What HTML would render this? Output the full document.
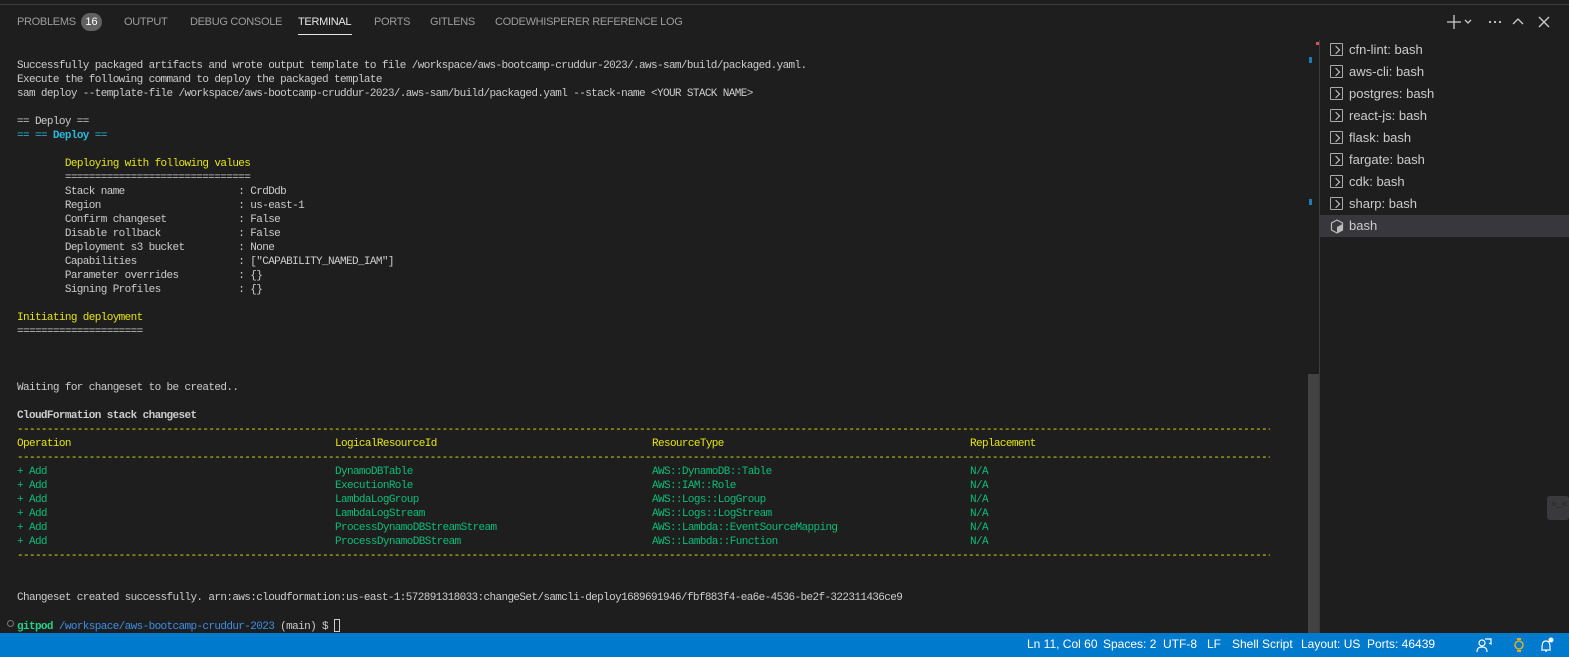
<!DOCTYPE html>
<html><head><meta charset="utf-8"><style>
*{margin:0;padding:0;box-sizing:border-box}
body{width:1569px;height:657px;background:#1e1e1e;overflow:hidden;position:relative;font-family:"Liberation Sans",sans-serif;color:#ccc}
.topline{position:absolute;left:0;top:4px;width:1569px;height:1px;background:#3c3c3c}
.tab{position:absolute;top:16px;font-size:11px;color:#9d9d9d;letter-spacing:-0.3px}
.tab.act{color:#e7e7e7}
.uline{position:absolute;left:298px;top:34px;width:54px;height:1px;background:#e7e7e7}
.badge{position:absolute;left:81px;top:13px;width:21px;height:18px;border-radius:9px;background:#616161;color:#fff;font-size:11px;text-align:center;line-height:18px}
pre{position:absolute;left:17px;top:59px;font-family:"Liberation Mono",monospace;font-size:11px;letter-spacing:-0.62px;line-height:14px;color:#ccc}
.y{color:#e5e510}.g{color:#0dbc79}.c{color:#29b8db;font-weight:bold}.b{font-weight:bold}.gp{color:#23d18b;font-weight:bold}.bl{color:#3b8eea}
.d{display:inline-block;width:1253px;overflow:hidden;vertical-align:top;color:#e5e510}
.c1,.c2,.c3{display:inline-block;vertical-align:top}
.c1{width:318px}.c2{width:317px}.c3{width:318px}
.thumb{position:absolute;left:1308px;top:374px;width:11px;height:259px;background:#424242}
.vline{position:absolute;left:1319px;top:40px;width:1px;height:593px;background:#3c3c3c}
.item{position:absolute;left:1320px;width:249px;height:22px;font-size:13px;color:#ccc;line-height:22px}
.item span.ic{position:absolute;left:10px;top:4px;width:13px;height:13px;border:1px solid #aaa;border-radius:1px}
.item span.ic:after{content:"";position:absolute;left:2px;top:2.5px;width:5px;height:5px;border-right:1.3px solid #ccc;border-bottom:1.3px solid #ccc;transform:rotate(-45deg)}
.item .t{position:absolute;left:29px}
.status{position:absolute;left:0;top:633px;width:1569px;height:24px;background:#007acc;color:#fff;font-size:12px}
.status span{position:absolute;top:4px}
</style></head><body>
<div class="topline"></div>
<div class="tab" style="left:17px">PROBLEMS</div>
<div class="badge">16</div>
<div class="tab" style="left:124px">OUTPUT</div>
<div class="tab" style="left:190px">DEBUG CONSOLE</div>
<div class="tab act" style="left:298px">TERMINAL</div>
<div class="uline"></div>
<div class="tab" style="left:374px">PORTS</div>
<div class="tab" style="left:430px">GITLENS</div>
<div class="tab" style="left:495px">CODEWHISPERER REFERENCE LOG</div>
<svg style="position:absolute;left:1444px;top:12px" width="110" height="20" viewBox="0 0 110 20">
<g stroke="#ccc" stroke-width="1.3" fill="none">
<path d="M3 10h14M10 3v14"/><path d="M21 8l3 3 3-3"/>
<path d="M69 12l5-5 5 5"/><path d="M95 5l10 10M105 5l-10 10"/>
</g>
<g fill="#ccc"><circle cx="46" cy="10" r="1.1"/><circle cx="51" cy="10" r="1.1"/><circle cx="56" cy="10" r="1.1"/></g>
</svg>
<pre>Successfully packaged artifacts and wrote output template to file /workspace/aws-bootcamp-cruddur-2023/.aws-sam/build/packaged.yaml.
Execute the following command to deploy the packaged template
sam deploy --template-file /workspace/aws-bootcamp-cruddur-2023/.aws-sam/build/packaged.yaml --stack-name &lt;YOUR STACK NAME&gt;

== Deploy ==
<span class="c" style="font-weight:normal">== == </span><span class="c">Deploy</span><span class="c" style="font-weight:normal"> ==</span>

        <span class="y">Deploying with following values</span>
        ===============================
        Stack name                   : CrdDdb
        Region                       : us-east-1
        Confirm changeset            : False
        Disable rollback             : False
        Deployment s3 bucket         : None
        Capabilities                 : ["CAPABILITY_NAMED_IAM"]
        Parameter overrides          : {}
        Signing Profiles             : {}

<span class="y">Initiating deployment</span>
=====================



Waiting for changeset to be created..

<span class="b">CloudFormation stack changeset</span>
<span class="d">------------------------------------------------------------------------------------------------------------------------------------------------------------------------------------------------------------------------------------------------</span>
<span class="y"><span class="c1">Operation</span><span class="c2">LogicalResourceId</span><span class="c3">ResourceType</span>Replacement</span>
<span class="d">------------------------------------------------------------------------------------------------------------------------------------------------------------------------------------------------------------------------------------------------</span>
<span class="g"><span class="c1">+ Add</span><span class="c2">DynamoDBTable</span><span class="c3">AWS::DynamoDB::Table</span>N/A</span>
<span class="g"><span class="c1">+ Add</span><span class="c2">ExecutionRole</span><span class="c3">AWS::IAM::Role</span>N/A</span>
<span class="g"><span class="c1">+ Add</span><span class="c2">LambdaLogGroup</span><span class="c3">AWS::Logs::LogGroup</span>N/A</span>
<span class="g"><span class="c1">+ Add</span><span class="c2">LambdaLogStream</span><span class="c3">AWS::Logs::LogStream</span>N/A</span>
<span class="g"><span class="c1">+ Add</span><span class="c2">ProcessDynamoDBStreamStream</span><span class="c3">AWS::Lambda::EventSourceMapping</span>N/A</span>
<span class="g"><span class="c1">+ Add</span><span class="c2">ProcessDynamoDBStream</span><span class="c3">AWS::Lambda::Function</span>N/A</span>
<span class="d">------------------------------------------------------------------------------------------------------------------------------------------------------------------------------------------------------------------------------------------------</span>


Changeset created successfully. arn:aws:cloudformation:us-east-1:572891318033:changeSet/samcli-deploy1689691946/fbf883f4-ea6e-4536-be2f-322311436ce9

<span class="gp">gitpod</span> <span class="bl">/workspace/aws-bootcamp-cruddur-2023</span> (main) $ <span style="display:inline-block;width:6px;height:13px;border:1px solid #ccc;vertical-align:-3px"></span></pre>
<div style="position:absolute;left:7px;top:620px;width:7px;height:7px;border:1px solid #777;border-radius:50%"></div>
<div class="thumb"></div>
<div style="position:absolute;left:1309px;top:57px;width:3px;height:6px;background:#1c7cb4"></div>
<div style="position:absolute;left:1309px;top:199px;width:3px;height:6px;background:#1c7cb4"></div>
<div style="position:absolute;left:1316px;top:42px;width:3px;height:3px;background:#e05252"></div>
<div class="vline"></div>
<div class="item" style="top:39px"><span class="ic"></span><span class="t">cfn-lint: bash</span></div>
<div class="item" style="top:61px"><span class="ic"></span><span class="t">aws-cli: bash</span></div>
<div class="item" style="top:83px"><span class="ic"></span><span class="t">postgres: bash</span></div>
<div class="item" style="top:105px"><span class="ic"></span><span class="t">react-js: bash</span></div>
<div class="item" style="top:127px"><span class="ic"></span><span class="t">flask: bash</span></div>
<div class="item" style="top:149px"><span class="ic"></span><span class="t">fargate: bash</span></div>
<div class="item" style="top:171px"><span class="ic"></span><span class="t">cdk: bash</span></div>
<div class="item" style="top:193px"><span class="ic"></span><span class="t">sharp: bash</span></div>
<div class="item" style="top:215px;background:#37373d"><svg style="position:absolute;left:10px;top:4px" width="14" height="15" viewBox="0 0 14 15"><path d="M7 1l5.5 3v7L7 14 1.5 11V4z" fill="none" stroke="#bbb" stroke-width="1.2"/><path d="M7 8v6l5.5-3V5z" fill="#bbb"/></svg><span class="t">bash</span></div>
<div style="position:absolute;left:1547px;top:496px;width:22px;height:24px;background:#3a3a3d;border-radius:3px;font-size:9px;color:#222;font-family:'Liberation Mono',monospace;padding:4px 0 0 4px">&gt;_&lt;</div>
<div class="status">
<span style="left:1027px">Ln 11, Col 60</span>
<span style="left:1103px">Spaces: 2</span>
<span style="left:1163px">UTF-8</span>
<span style="left:1207px">LF</span>
<span style="left:1232px">Shell Script</span>
<span style="left:1301px">Layout: US</span>
<span style="left:1367px">Ports: 46439</span>
<svg style="position:absolute;left:1476px;top:4px" width="80" height="16" viewBox="0 0 80 16"><g fill="none" stroke="#fff" stroke-width="1.2"><circle cx="6" cy="6" r="3"/><path d="M1 15c0-4 2-5 5-5s5 1 5 5M9 2h6v5l-2-1"/><path d="M65 13h10M66 12c0-6 1-8 4-8s4 2 4 8M69 14h2"/></g><circle cx="43" cy="8" r="4" fill="none" stroke="#d4b22c" stroke-width="1.5"/><rect x="41" y="1" width="4" height="2" fill="#d4b22c"/><rect x="41" y="13" width="4" height="2" fill="#d4b22c"/><circle cx="75" cy="3" r="2.5" fill="#fff"/></svg>
</div>
</body></html>
